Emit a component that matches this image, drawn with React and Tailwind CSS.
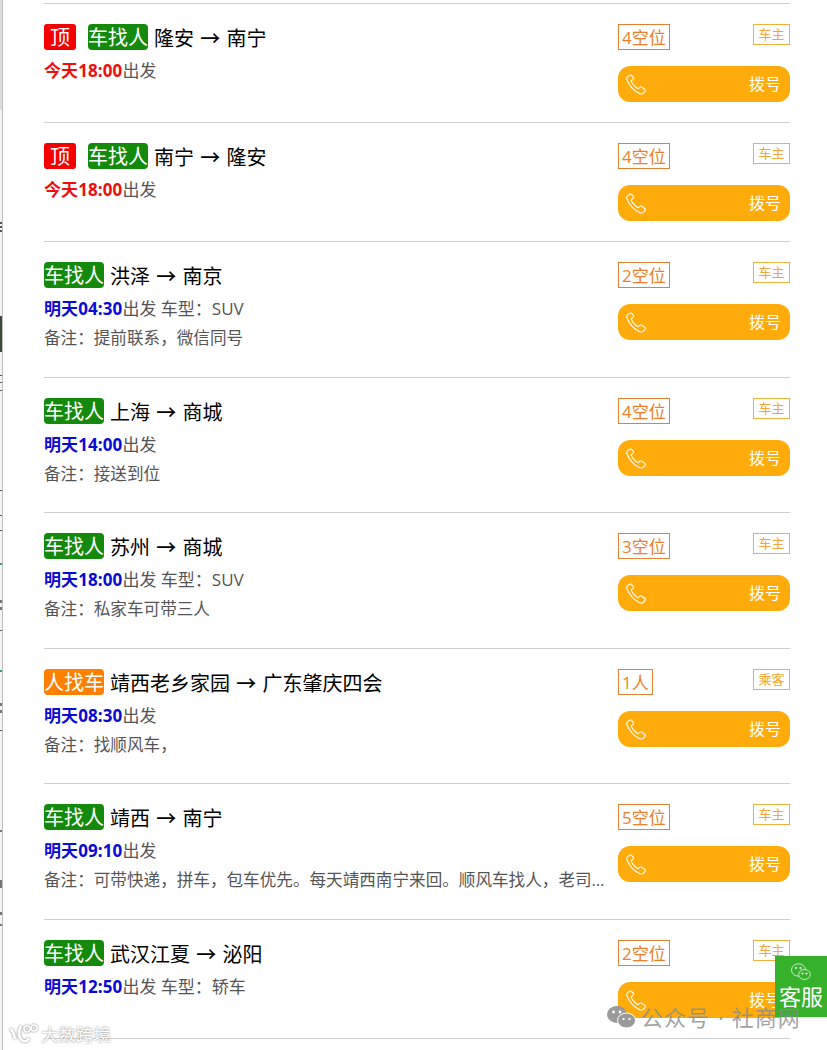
import React from "react";

const Phone = () => (
  <svg width="22" height="22" viewBox="0 0 24 24" fill="none" stroke="#fff" strokeWidth="1.2" strokeLinecap="round" strokeLinejoin="round">
    <path d="M5.2 2.4 2.9 4c-1 .8-1.2 2.2-.7 3.6 1.2 3.2 3.2 6.2 5.6 8.8 2.6 2.8 5.4 5 8.4 6.2 1.6.6 3.2.3 4.2-.8l1.4-1.6c.6-.7.5-1.6-.2-2.2l-3.3-2.6c-.7-.5-1.5-.5-2.1.1l-1.1 1.1c-.5.5-1.2.5-1.8.1-1.6-1.1-3.1-2.6-4.4-4.2-.8-1-1.4-2-1.9-3-.3-.6-.1-1.2.4-1.6l1.3-1c.6-.5.8-1.4.4-2.1L7.4 3c-.5-.8-1.4-1.1-2.2-.6Z" />
  </svg>
);

const rows = [
  { top: true, kind: "车找人", from: "隆安", to: "南宁", time: "今天18:00", seats: "4空位", role: "车主" },
  { top: true, kind: "车找人", from: "南宁", to: "隆安", time: "今天18:00", seats: "4空位", role: "车主" },
  { kind: "车找人", from: "洪泽", to: "南京", time: "明天04:30", extra: " 车型：SUV", note: "备注：提前联系，微信同号", seats: "2空位", role: "车主" },
  { kind: "车找人", from: "上海", to: "商城", time: "明天14:00", note: "备注：接送到位", seats: "4空位", role: "车主" },
  { kind: "车找人", from: "苏州", to: "商城", time: "明天18:00", extra: " 车型：SUV", note: "备注：私家车可带三人", seats: "3空位", role: "车主" },
  { kind: "人找车", from: "靖西老乡家园", to: "广东肇庆四会", time: "明天08:30", note: "备注：找顺风车，", seats: "1人", role: "乘客" },
  { kind: "车找人", from: "靖西", to: "南宁", time: "明天09:10", note: "备注：可带快递，拼车，包车优先。每天靖西南宁来回。顺风车找人，老司机安全第一，欢迎联系", seats: "5空位", role: "车主" },
  { kind: "车找人", from: "武汉江夏", to: "泌阳", time: "明天12:50", extra: " 车型：轿车", seats: "2空位", role: "车主" },
];

const strip = [
  { y: 222, h: 2, c: "#555" }, { y: 226, h: 2, c: "#555" }, { y: 230, h: 2, c: "#555" },
  { y: 316, h: 36, c: "#3b4a38" },
  { y: 375, h: 1, c: "#555" }, { y: 382, h: 1, c: "#555" }, { y: 390, h: 1, c: "#555" },
  { y: 490, h: 1, c: "#555" }, { y: 515, h: 1, c: "#555" }, { y: 530, h: 1, c: "#555" },
  { y: 563, h: 2, c: "#2aa76a" }, { y: 600, h: 3, c: "#777" }, { y: 607, h: 3, c: "#777" },
  { y: 630, h: 1, c: "#555" }, { y: 670, h: 2, c: "#2aa76a" }, { y: 703, h: 3, c: "#777" },
  { y: 710, h: 3, c: "#777" }, { y: 730, h: 1, c: "#555" }, { y: 830, h: 2, c: "#777" },
  { y: 880, h: 8, c: "#777" }, { y: 912, h: 3, c: "#777" }, { y: 924, h: 2, c: "#777" },
];

const Row = ({ r }) => (
  <div className={`flex w-[746px] border-t border-[#cfcfcf] pt-5 ${r.note ? "h-[135.5px]" : "h-[119px]"}`}>
    <div className="w-[574px] shrink-0">
      <div className="flex items-center h-[26px] text-[20px] text-black leading-[28px]">
        {r.top && <span className="mr-3 w-8 h-[26px] rounded-[3px] bg-[#f50000] text-white text-center">顶</span>}
        <span className={`w-[60px] h-[26px] rounded-[4px] text-white text-center ${r.kind === "车找人" ? "bg-[#138a0c]" : "bg-[#ff8000]"}`}>{r.kind}</span>
        <span className="ml-[6px] pt-[3px] whitespace-pre">
          {r.from} <span className="mx-[1px] font-['Noto_Sans_CJK_SC'] font-medium">→</span> {r.to}
        </span>
      </div>
      <div className="mt-[9px] h-[24px] leading-[24px] text-[17px] text-[#555]">
        <b className={`tracking-[0.1px] ${r.top ? "text-[#ec0f0f]" : "text-[#0a0ad2]"}`}>{r.time}</b>出发{r.extra}
      </div>
      {r.note && <div className="mt-[5px] w-[562px] h-[24px] leading-[24px] text-[16.6px] text-[#555] truncate">{r.note}</div>}
    </div>
    <div className="w-[172px] shrink-0">
      <div className="flex justify-between items-start h-[26px]">
        <span className="h-[26px] px-[3px] border border-[#e58032] text-[#ec7f2e] text-[17px] leading-[26px]">{r.seats}</span>
        <span className="h-[21px] w-[37px] border border-[#efb23d] text-[#f0a63a] text-[13px] leading-[19px] text-center">{r.role}</span>
      </div>
      <div className="mt-4 h-9 rounded-[12px] bg-[#ffab0b] text-white flex items-center justify-between pl-[7px] pr-[9px]">
        <Phone />
        <span className="text-[16px]">拨号</span>
      </div>
    </div>
  </div>
);

export default function App() {
  return (
    <div className="relative w-[827px] h-[1050px] overflow-hidden bg-white" style={{ fontFamily: '"Open Sans","Noto Sans CJK SC",sans-serif' }}>
      <div className="absolute left-0 top-0 bottom-0 w-[2px] bg-[#f4f4f4]" />
      <div className="absolute left-0 top-0 h-[110px] w-[2px] bg-[#dcdcdc]" />
      {strip.map((s, i) => (
        <div key={i} className="absolute left-0 w-[2px]" style={{ top: s.y, height: s.h, background: s.c }} />
      ))}
      <div className="absolute left-[2px] top-0 bottom-0 w-px bg-[#bdbdbd]" />
      <div className="pt-[3px] pl-[44px]">
        {rows.map((r, i) => <Row key={i} r={r} />)}
        <div className="border-t border-[#cfcfcf] w-[746px]" />
      </div>
      <div className="absolute left-[775px] top-[956px] w-[52px] h-[61px] bg-[#35b12b] text-white flex flex-col items-center">
        <svg className="mt-[7px]" width="20" height="18" viewBox="0 0 20 18" fill="none" stroke="#cfeccb" strokeWidth="1">
          <ellipse cx="7.5" cy="7" rx="7" ry="6.2" />
          <ellipse cx="13.5" cy="11.5" rx="5.8" ry="5" fill="#35b12b" />
          <circle cx="5" cy="5" r=".8" fill="#cfeccb" />
          <circle cx="9.5" cy="5" r=".8" fill="#cfeccb" />
          <circle cx="11.5" cy="10.5" r=".7" fill="#cfeccb" />
          <circle cx="15.5" cy="10.5" r=".7" fill="#cfeccb" />
        </svg>
        <span className="text-[22px] leading-[30px] whitespace-nowrap">客服</span>
      </div>
      <div className="absolute left-[606px] top-[1003px] flex items-center gap-[5px] text-[22px] leading-[28px] text-[#8a8a8a]/80 whitespace-nowrap">
        <svg width="30" height="24" viewBox="0 0 30 24" fill="#9a9a9a">
          <ellipse cx="11" cy="9.5" rx="10" ry="8.5" />
          <ellipse cx="20.5" cy="15.5" rx="9" ry="7.5" stroke="#fff" />
          <circle cx="7.5" cy="7" r="1.4" fill="#fff" />
          <circle cx="14" cy="7" r="1.4" fill="#fff" />
          <circle cx="17.5" cy="14" r="1.1" fill="#fff" />
          <circle cx="23.5" cy="14" r="1.1" fill="#fff" />
        </svg>
        <span className="tracking-[1px]">公众号</span>
        <span className="mx-[3px]">·</span>
        <span className="tracking-[1px]">社商网</span>
      </div>
      <div className="absolute left-[8px] top-[1021px] flex items-center gap-[3px] text-white text-[17.5px] leading-[26px] whitespace-nowrap [text-shadow:0_0_2px_#777]">
        <svg width="30" height="23" viewBox="0 0 30 23" fill="none" stroke="#fff" strokeWidth="2.6" style={{ filter: "drop-shadow(0 0 1px #777)" }}>
          <path d="M2 6c3 1 4 5 5 10M13 3c-3 5-3 12 2 15 3 1 5-1 6-3" />
          <circle cx="19" cy="6" r="3" strokeWidth="1.6" />
          <circle cx="26" cy="5" r="3" strokeWidth="1.6" />
        </svg>
        <span>大数跨境</span>
      </div>
    </div>
  );
}
